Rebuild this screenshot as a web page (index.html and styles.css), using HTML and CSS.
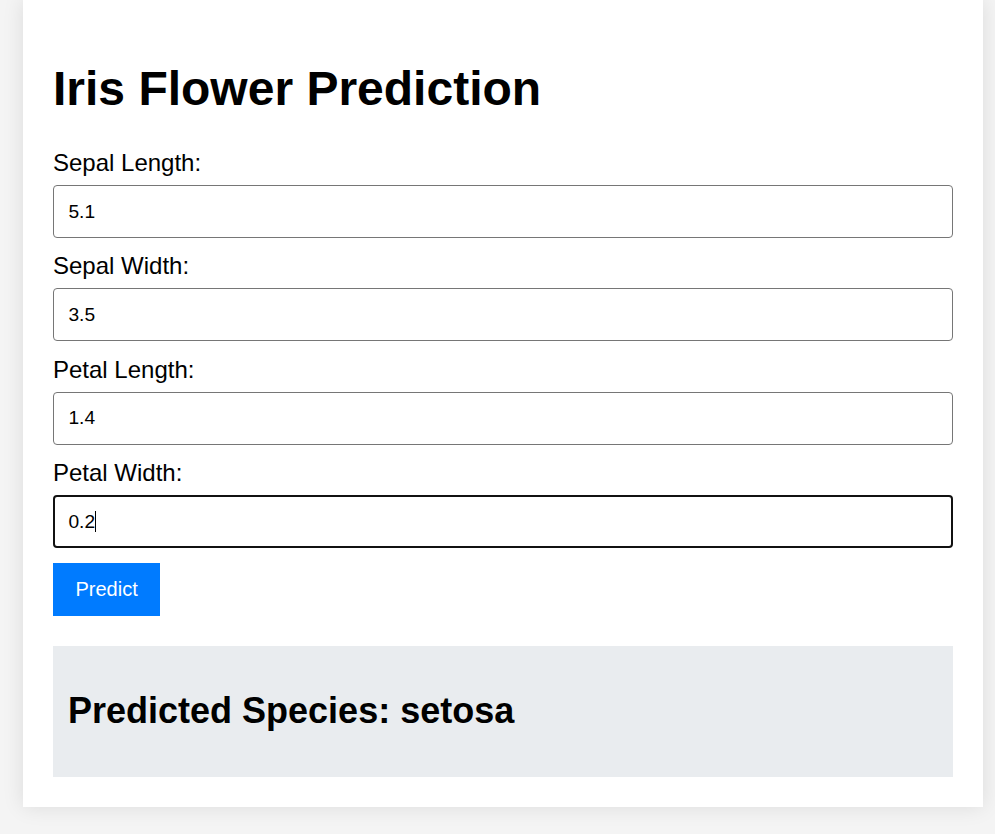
FILE: index.html
```html
<!DOCTYPE html>
<html lang="en">
<head>
    <meta charset="UTF-8">
    <meta name="viewport" content="width=device-width, initial-scale=1.0">
    <title>Iris Flower Prediction</title>
    <link rel="stylesheet" href="styles.css">
</head>
<body>

    <!-- Prediction Form -->
    <div class="container">
        <h1>Iris Flower Prediction</h1>

        <form class="predict-form">
            <label for="sepal_length">Sepal Length:</label>
            <input type="text" id="sepal_length" name="sepal_length" value="5.1">

            <label for="sepal_width">Sepal Width:</label>
            <input type="text" id="sepal_width" name="sepal_width" value="3.5">

            <label for="petal_length">Petal Length:</label>
            <input type="text" id="petal_length" name="petal_length" value="1.4">

            <label for="petal_width">Petal Width:</label>
            <div class="input-wrap">
                <input type="text" id="petal_width" name="petal_width" value="0.2" class="is-focus">
                <span class="caret"></span>
            </div>

            <button type="button">Predict</button>
        </form>

        <!-- Result -->
        <div class="result">
            <h2>Predicted Species: setosa</h2>
        </div>
    </div>

</body>
</html>
```

FILE: styles.css
```css
/* General Styles */
body {
    font-family: 'Liberation Sans', Arial, sans-serif;
    background-color: #f4f4f4;
    color: #000;
    margin: 0;
    padding: 0;
}

.container {
    width: 900px;
    margin: 0 0 26px 23px;
    padding: 30px;
    background-color: #fff;
    box-shadow: 0 0 20px rgba(0, 0, 0, 0.1);
}

h1 {
    font-size: 48px;
    margin: 31px 0 33px;
}

/* Form */
.predict-form label {
    display: block;
    font-size: 24px;
    margin-bottom: 8px;
}

.predict-form input {
    display: block;
    width: 100%;
    box-sizing: border-box;
    height: 53px;
    padding: 0 14.4px;
    margin-bottom: 14.4px;
    font-family: inherit;
    font-size: 19.2px;
    color: #000;
    border: 1px solid #767676;
    border-radius: 4px;
    background: #fff;
}

.predict-form input.is-focus {
    border: 2px solid #111;
    padding: 0 13.4px;
    outline: none;
}

.input-wrap {
    position: relative;
}

.caret {
    position: absolute;
    left: 42px;
    top: 16px;
    width: 1px;
    height: 21px;
    background: #000;
}

.predict-form button {
    display: block;
    height: 53px;
    padding: 0 22.5px;
    margin-top: 0.6px;
    font-family: inherit;
    font-size: 20px;
    color: #fff;
    background-color: #007bff;
    border: none;
    cursor: pointer;
}

/* Result */
.result {
    margin-top: 30px;
    padding: 15px;
    background-color: #e9ecef;
}

.result h2 {
    font-size: 36px;
    margin: 29.9px 0;
}
```
